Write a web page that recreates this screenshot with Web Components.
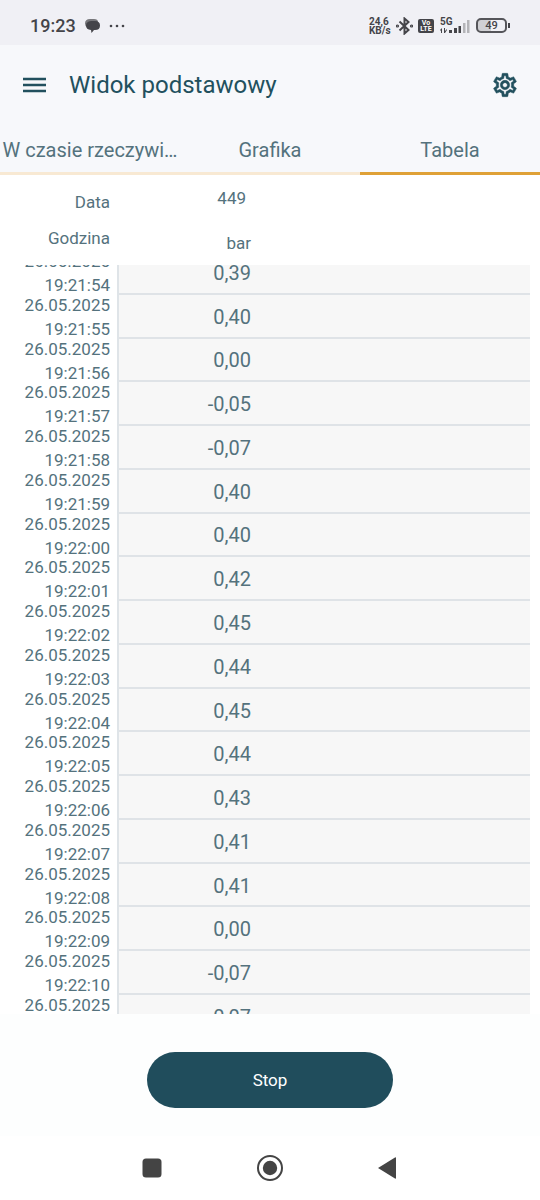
<!DOCTYPE html>
<html lang="pl">
<head>
<meta charset="utf-8">
<meta name="viewport" content="width=device-width, initial-scale=1">
<title>Widok podstawowy</title>
<style>
  html, body { margin: 0; height: 100%; }
  body { font-family: Roboto, "Liberation Sans", sans-serif; color: #54727d; background: #fff; }
</style>
</head>
<body>
<meter-app></meter-app>
<script>
function define(name, html, setup) {
  const template = document.createElement('template');
  template.innerHTML = html;
  customElements.define(name, class extends HTMLElement {
    constructor() {
      super();
      this.attachShadow({ mode: 'open' }).append(template.content.cloneNode(true));
    }
    connectedCallback() { if (setup) setup(this, this.shadowRoot); }
  });
}

define('status-bar', `
<style>
  :host { display: flex; align-items: center; justify-content: space-between; box-sizing: border-box;
    height: 45px; padding: 6px 30px 0; background: #f0f0f5; color: #444449; }
  div { display: flex; align-items: center; }
  svg { display: block; flex: none; }
  .clock { font-size: 18px; line-height: 24px; font-weight: 500; width: 55px; }
  .dots { margin-left: 9px; }
  .rate { font-size: 10px; line-height: 9px; font-weight: 700; width: 27px; white-space: pre; }
  .volte { flex-direction: column; justify-content: center; width: 16px; height: 14px; border-radius: 2px;
    background: #444449; color: #fff; font-size: 7px; line-height: 6px; font-weight: 700; margin-left: 5px; }
  .cell { position: relative; width: 30px; height: 18px; display: block; margin-left: 6px; }
  .cell span { position: absolute; left: 0; top: 0; font-size: 10px; line-height: 9px; font-weight: 700; }
  .battery { justify-content: center; box-sizing: border-box; width: 31px; height: 15px; margin-left: 6px;
    border: 2px solid #55555a; border-radius: 5px; font-size: 11px; line-height: 11px; font-weight: 500;
    background: linear-gradient(90deg, #d0d0d4 50%, transparent 50%); }
  .cap { width: 2px; height: 5px; background: #444449; margin-left: 1px; }
</style>
<div>
  <span class="clock">19:23</span>
  <svg width="15" height="14" viewBox="0 0 15 14"><path d="M5 0h4q4 0 4 3H6Q2 3 2 8Q0 7 0 4.500Q0 0 5 0Z" fill="#77777b"/><path d="M6 2h4q5 0 5 4.500T10 11H9L6.500 14L6 11Q1 10.500 1 6.500T6 2Z" fill="#444449"/></svg>
  <svg class="dots" width="16" height="4" viewBox="0 0 16 4" fill="#444449"><circle cx="2" cy="2" r="1.300"/><circle cx="8" cy="2" r="1.300"/><circle cx="14" cy="2" r="1.300"/></svg>
</div>
<div>
  <span class="rate">24,6
KB/s</span>
  <svg width="17" height="18" viewBox="0 0 17 18" fill="none" stroke="#444449" stroke-width="2"><path d="M3.500 4.500L12.500 13L8.500 16.500V1.500L12.500 5L3.500 13.500"/><circle cx="1.500" cy="9" r=".6"/><circle cx="15.500" cy="9" r=".6"/></svg>
  <div class="volte"><span>Vo</span><span>LTE</span></div>
  <div class="cell"><span>5G</span>
    <svg width="30" height="18" viewBox="0 0 30 18"><g fill="#444449"><path d="M0 13l2-2v5H1v-2zM4 11h1v3l2-2v1l-2 3H4zM9 13h3v3H9zM14 11h3v5h-3zM18.500 9h2.500v7h-2.500z"/></g><g fill="#b4b4b8"><path d="M23 6h2.500v10H23zM27 3h2.500v13H27z"/></g></svg></div>
  <div class="battery">49</div><span class="cap"></span>
</div>`);

define('app-header', `
<style>
  :host { display: flex; align-items: center; box-sizing: border-box; height: 80px; padding: 0 20px; color: #22505e; }
  button { display: grid; place-items: center; width: 30px; height: 40px; padding: 0; border: 0; background: none; color: inherit; }
  h1 { flex: 1; margin: 0 0 0 19px; font-size: 24px; line-height: 32px; font-weight: 400; }
</style>
<button type="button" aria-label="Menu"><svg width="24" height="18" viewBox="0 0 24 18" fill="currentColor"><path d="M0 1.700h23v2.500H0zM0 7.700h23v2.500H0zM0 13.700h23v2.500H0z"/></svg></button>
<h1><slot></slot></h1>
<button type="button" aria-label="Ustawienia"><svg width="28" height="28" viewBox="0 0 24 24" fill="currentColor" stroke="currentColor" stroke-width=".4"><path d="M19.430 12.980c.04-.32.07-.64.07-.98 0-.34-.03-.66-.07-.98l2.110-1.650c.19-.15.24-.42.12-.64l-2-3.460c-.09-.16-.26-.25-.44-.25-.06 0-.12.010-.17.030l-2.490 1c-.52-.4-1.080-.73-1.690-.98l-.38-2.650C14.460 2.180 14.250 2 14 2h-4c-.25 0-.46.180-.49.420l-.38 2.650c-.61.250-1.170.590-1.690.980l-2.490-1c-.06-.02-.12-.03-.18-.03-.17 0-.34.090-.43.250l-2 3.460c-.13.220-.07.490.12.640l2.110 1.650c-.04.320-.07.650-.07.980 0 .33.030.66.070.98l-2.110 1.650c-.19.150-.24.420-.12.640l2 3.460c.09.160.26.250.44.250.06 0 .12-.01.170-.03l2.490-1c.52.400 1.080.730 1.690.980l.38 2.650c.03.240.24.420.49.420h4c.25 0 .46-.18.490-.42l.38-2.650c.61-.25 1.170-.59 1.690-.98l2.490 1c.06.020.12.030.18.030.17 0 .34-.09.430-.25l2-3.460c.12-.22.070-.49-.12-.64l-2.110-1.650zm-1.980-1.710c.04.310.05.520.05.730 0 .21-.02.430-.05.730l-.14 1.130.89.700 1.080.840-.7 1.210-1.270-.51-1.040-.42-.9.680c-.43.320-.84.560-1.250.730l-1.060.430-.16 1.130-.2 1.350h-1.400l-.19-1.350-.16-1.130-1.060-.43c-.43-.18-.83-.41-1.230-.71l-.91-.7-1.060.430-1.270.510-.7-1.210 1.080-.84.890-.7-.14-1.130c-.03-.31-.05-.54-.05-.74s.02-.43.050-.73l.14-1.130-.89-.7-1.080-.84.700-1.210 1.270.510 1.040.420.900-.68c.43-.32.840-.56 1.250-.73l1.060-.43.160-1.130.2-1.350h1.390l.19 1.350.16 1.130 1.060.430c.43.180.83.410 1.230.710l.91.700 1.060-.43 1.270-.51.700 1.210-1.070.850-.89.700.14 1.130zM12 8c-2.210 0-4 1.790-4 4s1.790 4 4 4 4-1.790 4-4-1.790-4-4-4zm0 6c-1.100 0-2-.9-2-2s.9-2 2-2 2 .9 2 2-.9 2-2 2z"/></svg></button>`);

define('tab-bar', `
<style>
  :host { display: flex; }
  button { flex: 1 1 0; min-width: 0; height: 50px; box-sizing: border-box; padding: 2px 0 0; border: 0; border-bottom: 3px solid #f8e9d3;
    background: none; color: inherit; font: 400 20px/24px Roboto, "Liberation Sans", sans-serif;
    overflow: hidden; text-overflow: ellipsis; white-space: nowrap; }
  button[aria-selected=true] { border-color: #dfa137; }
</style>
<button type="button" role="tab" aria-selected="false">W czasie rzeczywi…</button>
<button type="button" role="tab" aria-selected="false">Grafika</button>
<button type="button" role="tab" aria-selected="true">Tabela</button>`, host => host.setAttribute('role', 'tablist'));

define('reading-table', `
<style>
  :host { display: flex; flex-direction: column; flex: 1; min-height: 0; padding-right: 10px; }
  .viewport { flex: 1; min-height: 0; overflow: hidden; }
  table { width: 100%; border-collapse: separate; border-spacing: 0; table-layout: fixed; }
  th, td { padding: 0; font-weight: 400; }
  .head { height: 90px; }
  .head th { font-size: 17px; line-height: 18px; vertical-align: top; }
  th span { display: block; }
  .when { width: 119px; box-sizing: border-box; text-align: right; }
  .head .when { padding: 18px 9px 0 0; }
  .head .when span + span { margin-top: 18px; }
  .head .value { text-align: left; padding-top: 14px; }
  .name, .unit, output { display: block; width: 132px; box-sizing: border-box; text-align: right; }
  .name { padding-right: 5px; }
  .unit { margin-top: 27px; }
  .rows { height: 788px; margin-top: -14px; }
  .rows th { font-size: 17px; line-height: 18px; vertical-align: top; padding: 1px 7px 0 0; border-right: 2px solid #dfe4e8; }
  .rows th span + span { margin-top: 6px; }
  td { padding-top: 2px; background: #f7f7f7; border-bottom: 2px solid #dfe3e7; }
  output { font-size: 20px; line-height: 24px; }
</style>
<table class="head"><thead><tr>
  <th class="when" scope="col"><span>Data</span><span>Godzina</span></th>
  <th class="value" scope="col"><span class="name">449</span><span class="unit">bar</span></th>
</tr></thead></table>
<div class="viewport"><table class="rows" aria-label="449, bar"><tbody></tbody></table></div>`, (host, root) => {
  const values = ['0,39', '0,40', '0,00', '-0,05', '-0,07', '0,40', '0,40', '0,42', '0,45',
    '0,44', '0,45', '0,44', '0,43', '0,41', '0,41', '0,00', '-0,07', '-0,07'];
  const start = 19 * 3600 + 21 * 60 + 54;
  const two = n => String(n).padStart(2, '0');
  root.querySelector('tbody').innerHTML = values.map((value, i) => {
    const t = start + i;
    const time = [t / 3600, t / 60 % 60, t % 60].map(n => two(Math.floor(n))).join(':');
    return `<tr><th class="when" scope="row"><span>26.05.2025</span><span>${time}</span></th><td><output>${value}</output></td></tr>`;
  }).join('');
});

define('action-button', `
<style>
  :host { display: flex; justify-content: center; padding: 38px 20px 28px; background: #fdfefe; }
  button { width: 246px; height: 56px; border: 0; border-radius: 28px; background: #204d5c; color: #fff;
    font: 400 17px/24px Roboto, "Liberation Sans", sans-serif; }
</style>
<button type="button"><slot></slot></button>`);

define('system-nav', `
<style>
  :host { display: flex; justify-content: center; align-items: center; gap: 78px; height: 64px; background: #fff; }
  button { width: 40px; height: 40px; padding: 0; border: 0; background: none; display: grid; place-items: center; }
  svg { fill: #444; }
</style>
<button type="button" aria-label="Ostatnie"><svg width="28" height="28" viewBox="0 0 28 28"><rect x="4.500" y="4.500" width="19" height="19" rx="3.500"/></svg></button>
<button type="button" aria-label="Ekran główny"><svg width="28" height="28" viewBox="0 0 28 28"><circle cx="14" cy="14" r="12" fill="none" stroke="#444" stroke-width="2"/><circle cx="14" cy="14" r="7.200"/></svg></button>
<button type="button" aria-label="Wstecz"><svg width="28" height="28" viewBox="0 0 28 28"><path d="M4 14L21 3.500Q22 3 22 4V24Q22 25 21 24.500Z"/></svg></button>`);

define('meter-app', `
<style>
  :host { display: flex; flex-direction: column; height: 100vh; }
  header { background: #f7f8fb; }
</style>
<status-bar></status-bar>
<header><app-header>Widok podstawowy</app-header><tab-bar></tab-bar></header>
<reading-table></reading-table>
<action-button>Stop</action-button>
<system-nav></system-nav>`);
</script>
</body>
</html>
